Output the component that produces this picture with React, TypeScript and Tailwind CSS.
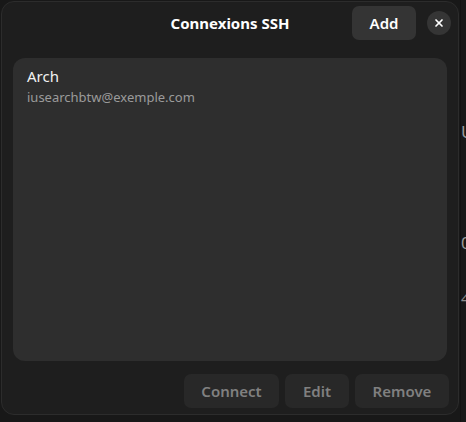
import { X } from 'lucide-react'

const font = { fontFamily: '"Noto Sans", "Open Sans", sans-serif' }

export default function App() {
  return (
    <div
      className="relative h-[422px] w-[466px] overflow-hidden bg-[#181818] pl-px pt-px text-white"
      style={font}
    >
      {/* bits of the window behind */}
      <div className="absolute left-[460px] top-0 h-full w-px bg-[#121212]" />
      <span className="absolute left-[461px] top-[119px] text-[17px] text-[#9a9a9a]">U</span>
      <span className="absolute left-[461px] top-[230px] text-[17px] text-[#9a9a9a]">0</span>
      <span className="absolute left-[461px] top-[287px] text-[15px] text-[#8a8a8a]">4</span>

      <div className="flex h-[414px] w-[458px] flex-col rounded-[13px] border border-[#2c2c2c] bg-[#1e1e1e]">
        {/* header */}
        <div className="grid h-[42px] grid-cols-[1fr_auto_1fr] items-center">
          <div />
          <div className="text-[15px] font-bold">Connexions SSH</div>
          <div className="flex items-center justify-end gap-[11px] pr-[7px]">
            <button className="h-[34px] w-[64px] rounded-[7px] bg-[#343434] text-[15px] font-semibold">
              Add
            </button>
            <button className="flex h-[24px] w-[24px] items-center justify-center rounded-full bg-[#353535]">
              <X size={12} strokeWidth={3.4} />
            </button>
          </div>
        </div>

        {/* list */}
        <div className="mx-[11px] mt-[14px] h-[303px] rounded-[12px] bg-[#2e2e2e] px-[14px] pt-[7px]">
          <div className="text-[15px] leading-[22px] text-[#f2f2f2]">Arch</div>
          <div className="text-[13px] leading-[20px] text-[#9b9b9b]">iusearchbtw@exemple.com</div>
        </div>

        {/* actions */}
        <div className="mt-[13px] flex justify-end gap-[6px] pr-[9px]">
          <button className="h-[34px] w-[95px] rounded-[7px] bg-[#282828] text-[15px] font-semibold text-[#808080]">
            Connect
          </button>
          <button className="h-[34px] w-[64px] rounded-[7px] bg-[#282828] text-[15px] font-semibold text-[#808080]">
            Edit
          </button>
          <button className="h-[34px] w-[94px] rounded-[7px] bg-[#282828] text-[15px] font-semibold text-[#808080]">
            Remove
          </button>
        </div>
      </div>
    </div>
  )
}
